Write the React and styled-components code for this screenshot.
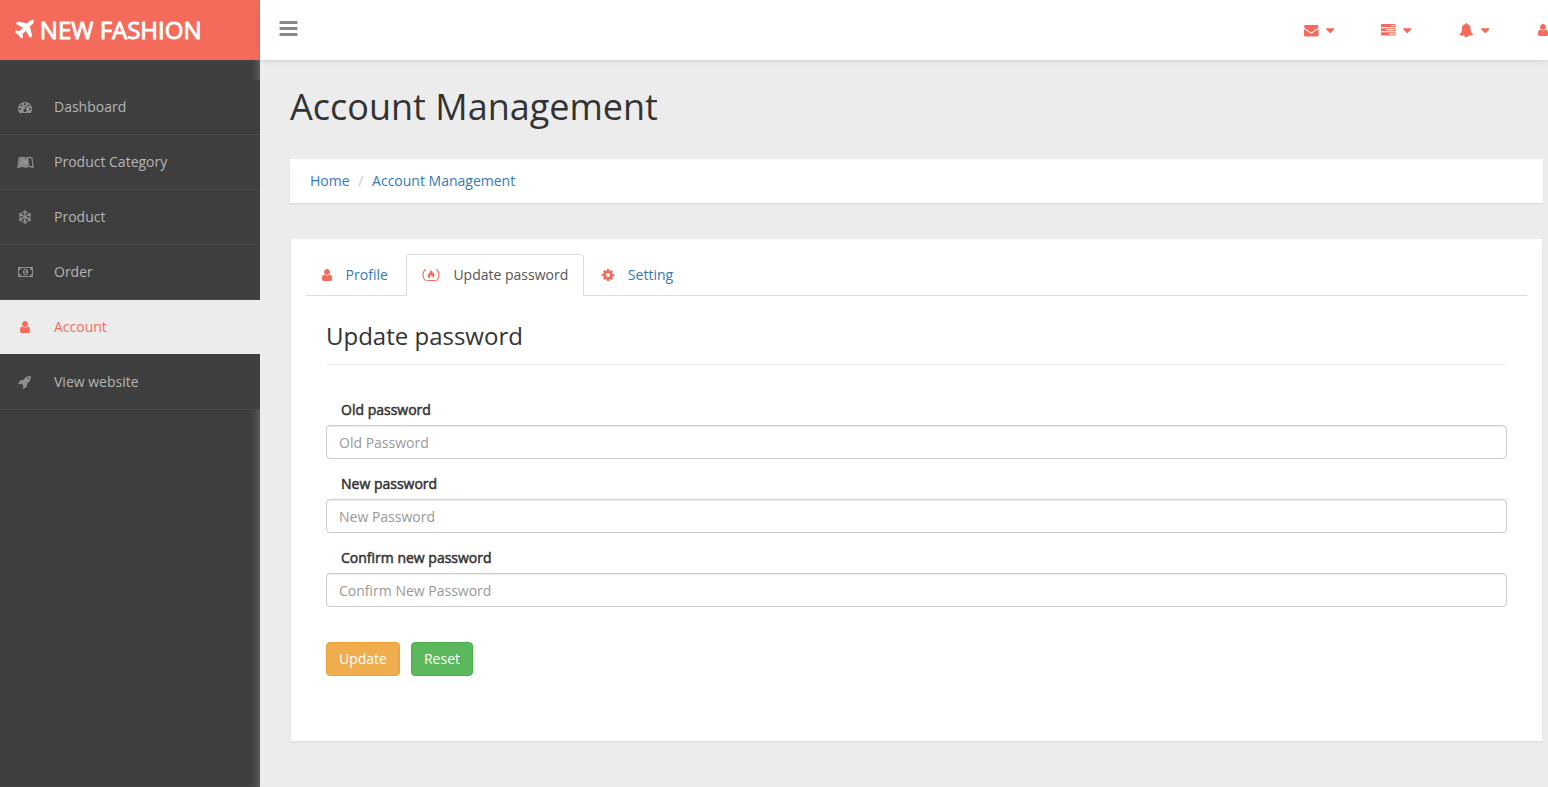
import React from "react";
import styled, { createGlobalStyle, css } from "styled-components";
import { FaLeanpub } from "react-icons/fa";

const coral = "#f56b5b";

const GlobalStyle = createGlobalStyle`
  *, *::before, *::after { box-sizing: border-box; }
  html, body { margin: 0; padding: 0; }
  body {
    overflow: hidden;
    background: #ececec;
    color: #333;
    font: 14px/20px "Open Sans", "Noto Sans", sans-serif;
  }
  a { text-decoration: none; color: #337ab7; }
`;

const paths = {
  plane:
    "M1568 160q44 52 12 148t-108 172l-161 161 160 696q5 19-12 33l-128 96q-7 6-19 6-4 0-7-1-15-3-21-16l-279-508-259 259 53 194q5 17-8 31l-96 96q-9 9-23 9h-2q-15-2-24-13l-189-252-252-189q-11-7-13-23-1-13 9-25l96-97q9-9 23-9 6 0 8 1l194 53 259-259-508-279q-14-8-17-24-2-16 9-27l128-128q14-13 30-8l665 159 160-160q76-76 172-108t148 12z",
  bars: "M1664 1344v128q0 26-19 45t-45 19h-1408q-26 0-45-19t-19-45v-128q0-26 19-45t45-19h1408q26 0 45 19t19 45zm0-512v128q0 26-19 45t-45 19h-1408q-26 0-45-19t-19-45v-128q0-26 19-45t45-19h1408q26 0 45 19t19 45zm0-512v128q0 26-19 45t-45 19h-1408q-26 0-45-19t-19-45v-128q0-26 19-45t45-19h1408q26 0 45 19t19 45z",
  user: "M1536 1399q0 109-62.5 187t-150.5 78h-854q-88 0-150.5-78t-62.5-187q0-85 8.5-160.5t31.5-152 58.5-131 94-89 134.5-34.5q131 128 313 128t313-128q76 0 134.5 34.5t94 89 58.5 131 31.5 152 8.5 160.5zm-256-887q0 159-112.5 271.5t-271.5 112.5-271.5-112.5-112.5-271.5 112.5-271.5 271.5-112.5 271.5 112.5 112.5 271.5z",
  cog: "M1152 896q0-106-75-181t-181-75-181 75-75 181 75 181 181 75 181-75 75-181zm512-109v222q0 12-8 23t-20 13l-185 28q-19 54-39 91 35 50 107 138 10 12 10 25t-9 23q-27 37-99 108t-94 71q-12 0-26-9l-138-108q-44 23-91 38-16 136-29 186-7 28-36 28h-222q-14 0-24.5-8.5t-11.5-21.5l-28-184q-49-16-90-37l-141 107q-10 9-25 9-14 0-25-11-126-114-165-168-7-10-7-23 0-12 8-23 15-21 51-66.5t54-70.5q-27-50-41-99l-183-27q-13-2-21-12.5t-8-23.5v-222q0-12 8-23t19-13l186-28q14-46 39-92-40-57-107-138-10-12-10-24 0-10 9-23 26-36 98.5-107.5t94.5-71.5q13 0 26 10l138 107q44-23 91-38 16-136 29-186 7-28 36-28h222q14 0 24.5 8.5t11.5 21.5l28 184q49 16 90 37l142-107q9-9 24-9 13 0 25 10 129 119 165 170 7 8 7 22 0 12-8 23-15 21-51 66.5t-54 70.5q26 50 41 98l183 28q13 2 21 12.5t8 23.5z",
  envelope:
    "M1792 710v794q0 66-47 113t-113 47h-1472q-66 0-113-47t-47-113v-794q44 49 101 87 362 246 497 345 57 42 92.5 65.5t94.5 48 110 24.5h2q51 0 110-24.5t94.5-48 92.5-65.5q170-123 498-345 57-39 100-87zm0-294q0 79-49 151t-122 123q-376 261-468 325-10 7-42.5 31t-54 38.5-52 32.5-57.5 27-50 9h-2q-23 0-50-9t-57.5-27-52-32.5-54-38.5-42.5-31q-91-64-262-182.5t-205-142.5q-62-42-117-115.5t-55-136.5q0-78 41.5-130t118.5-52h1472q65 0 112.5 47t47.5 113z",
  tasks:
    "M1024 1408h640v-128h-640v128zm-384-512h1024v-128h-1024v128zm640-512h384v-128h-384v128zm512 832v256q0 26-19 45t-45 19h-1664q-26 0-45-19t-19-45v-256q0-26 19-45t45-19h1664q26 0 45 19t19 45zm0-512v256q0 26-19 45t-45 19h-1664q-26 0-45-19t-19-45v-256q0-26 19-45t45-19h1664q26 0 45 19t19 45zm0-512v256q0 26-19 45t-45 19h-1664q-26 0-45-19t-19-45v-256q0-26 19-45t45-19h1664q26 0 45 19t19 45z",
  bell: "M912 1696q0-16-16-16-59 0-101.5-42.5t-42.5-101.5q0-16-16-16t-16 16q0 73 51.5 124.5t124.5 51.5q16 0 16-16zm816-288q0 52-38 90t-90 38h-448q0 106-75 181t-181 75-181-75-75-181h-448q-52 0-90-38t-38-90q50-42 91-88t85-119.5 74.5-158.5 50-206 19.5-260q0-152 117-282.5t307-158.5q-8-19-8-39 0-40 28-68t68-28 68 28 28 68q0 20-8 39 190 28 307 158.5t117 282.5q0 139 19.5 260t50 206 74.5 158.5 85 119.5 91 88z",
  caret:
    "M1408 704q0 26-19 45l-448 448q-19 19-45 19t-45-19l-448-448q-19-19-19-45t19-45 45-19h896q26 0 45 19t19 45z",
  gauge:
    "M384 1152q0-53-37.5-90.5t-90.5-37.5-90.5 37.5-37.5 90.5 37.5 90.5 90.5 37.5 90.5-37.5 37.5-90.5zm192-448q0-53-37.5-90.5t-90.5-37.5-90.5 37.5-37.5 90.5 37.5 90.5 90.5 37.5 90.5-37.5 37.5-90.5zm428 481l101-382q6-26-7.5-48.5t-38.5-29.5-48 6.5-30 39.5l-101 382q-60 5-107 43.5t-63 98.5q-20 77 20 146t117 89 146-20 89-117q16-60-6-117t-72-91zm660-33q0-53-37.5-90.5t-90.5-37.5-90.5 37.5-37.5 90.5 37.5 90.5 90.5 37.5 90.5-37.5 37.5-90.5zm-640-640q0-53-37.5-90.5t-90.5-37.5-90.5 37.5-37.5 90.5 37.5 90.5 90.5 37.5 90.5-37.5 37.5-90.5zm448 192q0-53-37.5-90.5t-90.5-37.5-90.5 37.5-37.5 90.5 37.5 90.5 90.5 37.5 90.5-37.5 37.5-90.5zm320 448q0 261-141 483-19 29-54 29h-1402q-35 0-54-29-141-221-141-483 0-182 71-348t191-286 286-191 348-71 348 71 286 191 191 286 71 348z",
  money:
    "M768 1152h384v-96h-128v-448h-114l-148 137 77 80q42-37 55-57h2v288h-128v96zm512-256q0 70-21 142t-59.5 134-101.5 101-138 39-138-39-101.5-101-59.5-134-21-142 21-142 59.5-134 101.5-101 138-39 138 39 101.5 101 59.5 134 21 142zm512 256v-512q-106 0-181-75t-75-181h-1152q0 106-75 181t-181 75v512q106 0 181 75t75 181h1152q0-106 75-181t181-75zm128-832v1152q0 26-19 45t-45 19h-1792q-26 0-45-19t-19-45v-1152q0-26 19-45t45-19h1792q26 0 45 19t19 45z",
  rocket:
    "M1440 448q0-40-28-68t-68-28-68 28-28 68 28 68 68 28 68-28 28-68zm224-288q0 249-75.5 430.5t-253.5 360.5q-81 80-195 176l-20 379q-2 16-16 26l-384 224q-7 4-16 4-12 0-23-9l-64-64q-13-14-8-32l85-276-281-281-276 85q-3 1-9 1-14 0-23-9l-64-64q-17-19-5-39l224-384q10-14 26-16l379-20q96-114 176-195 188-187 358-258t431-71q14 0 24 9.5t10 22.5z",
};

/* Icons are drawn on a 1792-unit em; `x` and `w` trim the side bearings. */
const Svg = styled.svg`
  display: block;
  flex: none;
  fill: currentColor;
`;

const LineSvg = styled(Svg)`
  fill: none;
  stroke: currentColor;
`;

function Icon({ name, size = 14, x = 0, w = 1792 }) {
  return (
    <Svg width={(size * w) / 1792} height={size} viewBox={`${x} 0 ${w} 1792`}>
      <path d={paths[name]} />
    </Svg>
  );
}

function Snowflake() {
  return (
    <LineSvg width="14" height="14" viewBox="0 0 14 14" strokeWidth="1.35">
      {[0, 60, 120, 180, 240, 300].map((angle) => (
        <path
          key={angle}
          transform={`rotate(${angle} 7 7)`}
          d="M7 7V0.1M5 1.5L7 3.4L9 1.5"
        />
      ))}
    </LineSvg>
  );
}

/* Flame over a base line, between a pair of brackets. */
function Camp() {
  return (
    <LineSvg width="18" height="14" viewBox="0 0 18 14" strokeWidth="1.1">
      <path d="M3.6 1.2C0 4.6 0 9.6 3.6 13M14.4 1.2C18 4.6 18 9.6 14.4 13M5 12.5H13" />
      <path
        fill="currentColor"
        stroke="none"
        d="M8.4 1.6C10.3 2.9 10.2 4.2 10.9 5.2C11.2 4.9 11.2 4.5 11.1 4.1C12.6 5.7 13.3 8.7 10.6 10.6C11.2 9.2 10.8 8.2 10.1 7.4C10 8.2 9.6 8.4 9.2 8.1C8.9 7.6 9.3 6.8 8.8 6.1C8.7 7.4 7.3 8.4 8 10.6C4.8 9.2 5.3 6.9 7 5.2C8.2 4 8.8 3.1 8.4 1.6Z"
      />
    </LineSvg>
  );
}

const Page = styled.div`
  display: grid;
  grid-template: 60px 1fr / 260px 1fr;
  width: 1548px;
  height: 787px;
  overflow: hidden;
`;

const Brand = styled.a`
  display: flex;
  align-items: center;
  gap: 6px;
  padding-left: 15px;
  background: ${coral};
  color: #fff;
  font-size: 24px;
  line-height: 60px;
  -webkit-text-stroke: 0.9px #fff;
  svg { stroke: none; }
`;

const TopBar = styled.header`
  display: flex;
  align-items: center;
  justify-content: space-between;
  padding-left: 18px;
  background: #fff;
  box-shadow: 0 1px 5px rgba(0, 0, 0, 0.13);
`;

const MenuToggle = styled.div`
  color: #888;
  padding-bottom: 3px;
`;

const TopActions = styled.nav`
  display: flex;
  flex: none;
  color: ${coral};
`;

const TopAction = styled.a`
  display: flex;
  align-items: center;
  justify-content: flex-start;
  gap: 7px;
  width: ${(p) => p.$width}px;
  color: inherit;
`;

const Sidebar = styled.aside`
  padding-top: 20px;
  background: #3e3e3e;
  box-shadow: inset -6px 0 8px -4px rgba(255, 255, 255, 0.22);
`;

const NavItem = styled.a`
  display: flex;
  align-items: center;
  height: 55px;
  padding-left: 16px;
  border-bottom: 1px solid #484848;
  background: #3e3e3e;
  color: #b5b5b5;
  ${(p) =>
    p.$active &&
    css`
      background: #ececec;
      background-clip: padding-box;
      border-bottom-color: #3e3e3e;
      color: ${coral};
    `}
`;

const NavIcon = styled.span`
  display: flex;
  justify-content: center;
  width: 18px;
  margin-right: 20px;
  color: ${(p) => (p.$active ? coral : "#8f8f8f")};
`;

const Content = styled.main`
  min-width: 0;
  padding: 27px 5px 0 30px;
`;

const Title = styled.h1`
  margin: 0 0 32px;
  font-size: 36px;
  line-height: 40px;
  font-weight: 400;
`;

const Breadcrumb = styled.nav`
  display: flex;
  height: 44px;
  padding: 12px 20px;
  background: #fff;
  box-shadow: 0 1px 2px rgba(0, 0, 0, 0.08);
`;

const Separator = styled.span`
  width: 22.5px;
  text-align: center;
  color: #ccc;
`;

const Panel = styled.section`
  height: 502px;
  margin: 36px 1px 0;
  padding: 15px;
  background: #fff;
  box-shadow: 0 1px 2px rgba(0, 0, 0, 0.08);
`;

const Tabs = styled.nav`
  display: flex;
  height: 42px;
  border-bottom: 1px solid #ddd;
`;

const Tab = styled.a`
  display: flex;
  align-items: center;
  gap: 13.6px;
  height: 42px;
  margin-right: ${(p) => p.$gap || 0}px;
  padding: 0 15px;
  border: 1px solid ${(p) => (p.$active ? "#ddd" : "transparent")};
  border-bottom-color: ${(p) => (p.$active ? "#fff" : "transparent")};
  border-radius: 4px 4px 0 0;
  color: ${(p) => (p.$active ? "#555" : "#337ab7")};
  svg { color: ${coral}; }
`;

const Form = styled.form`
  padding: 24px 20px 0;
`;

const Heading = styled.h3`
  margin: 0 0 35px;
  padding-bottom: 12px;
  border-bottom: 1px solid #eee;
  font-size: 24px;
  line-height: 32px;
  font-weight: 400;
`;

const Field = styled.div`
  margin-bottom: 15px;
`;

const Label = styled.label`
  display: block;
  margin-bottom: 5px;
  padding-left: 15px;
  -webkit-text-stroke: 0.5px #333;
`;

const Input = styled.input`
  display: block;
  width: 100%;
  height: 34px;
  padding: 6px 12px;
  border: 1px solid #ccc;
  border-radius: 4px;
  background: #fff;
  box-shadow: inset 0 1px 1px rgba(0, 0, 0, 0.075);
  font: inherit;
  &::placeholder { color: #999; opacity: 1; }
`;

const Actions = styled.div`
  display: flex;
  gap: 11px;
  padding-top: 20px;
`;

const variants = {
  warning: css`background: #f0ad4e; border-color: #eea236;`,
  success: css`background: #5cb85c; border-color: #4cae4c;`,
};

const Button = styled.button`
  height: 34px;
  padding: 0 12px;
  border: 1px solid;
  border-radius: 4px;
  color: #fff;
  font: inherit;
  ${(p) => variants[p.$variant]}
`;

const navItems = [
  { label: "Dashboard", icon: <Icon name="gauge" /> },
  { label: "Product Category", icon: <FaLeanpub size={17} /> },
  { label: "Product", icon: <Snowflake /> },
  { label: "Order", icon: <Icon name="money" w={1920} /> },
  { label: "Account", icon: <Icon name="user" x={256} w={1280} />, active: true },
  { label: "View website", icon: <Icon name="rocket" /> },
];

const fields = ["Old", "New", "Confirm new"];
const placeholders = ["Old Password", "New Password", "Confirm New Password"];

export default function App() {
  return (
    <>
      <GlobalStyle />
      <Page>
        <Brand>
          <Icon name="plane" size={24} x={192} w={1408} />
          NEW FASHION
        </Brand>
        <TopBar>
          <MenuToggle>
            <Icon name="bars" size={21} />
          </MenuToggle>
          <TopActions>
            <TopAction $width={77}>
              <Icon name="envelope" size={14.5} />
              <Icon name="caret" size={15} x={384} w={1024} />
            </TopAction>
            <TopAction $width={78}>
              <Icon name="tasks" size={14.5} />
              <Icon name="caret" size={15} x={384} w={1024} />
            </TopAction>
            <TopAction $width={79}>
              <Icon name="bell" size={14.5} />
              <Icon name="caret" size={15} x={384} w={1024} />
            </TopAction>
            <TopAction $width={10}>
              <Icon name="user" x={256} w={1280} />
            </TopAction>
          </TopActions>
        </TopBar>
        <Sidebar>
          {navItems.map((item) => (
            <NavItem key={item.label} $active={item.active}>
              <NavIcon $active={item.active}>{item.icon}</NavIcon>
              {item.label}
            </NavItem>
          ))}
        </Sidebar>
        <Content>
          <Title>Account Management</Title>
          <Breadcrumb>
            <a>Home</a>
            <Separator>/</Separator>
            <a>Account Management</a>
          </Breadcrumb>
          <Panel>
            <Tabs>
              <Tab $gap={2}>
                <Icon name="user" x={256} w={1280} />
                Profile
              </Tab>
              <Tab $active $gap={2}>
                <Camp />
                Update password
              </Tab>
              <Tab>
                <Icon name="cog" x={128} w={1536} />
                Setting
              </Tab>
            </Tabs>
            <Form>
              <Heading>Update password</Heading>
              {fields.map((name, i) => (
                <Field key={name}>
                  <Label>{name} password</Label>
                  <Input placeholder={placeholders[i]} />
                </Field>
              ))}
              <Actions>
                <Button type="button" $variant="warning">Update</Button>
                <Button type="button" $variant="success">Reset</Button>
              </Actions>
            </Form>
          </Panel>
        </Content>
      </Page>
    </>
  );
}
